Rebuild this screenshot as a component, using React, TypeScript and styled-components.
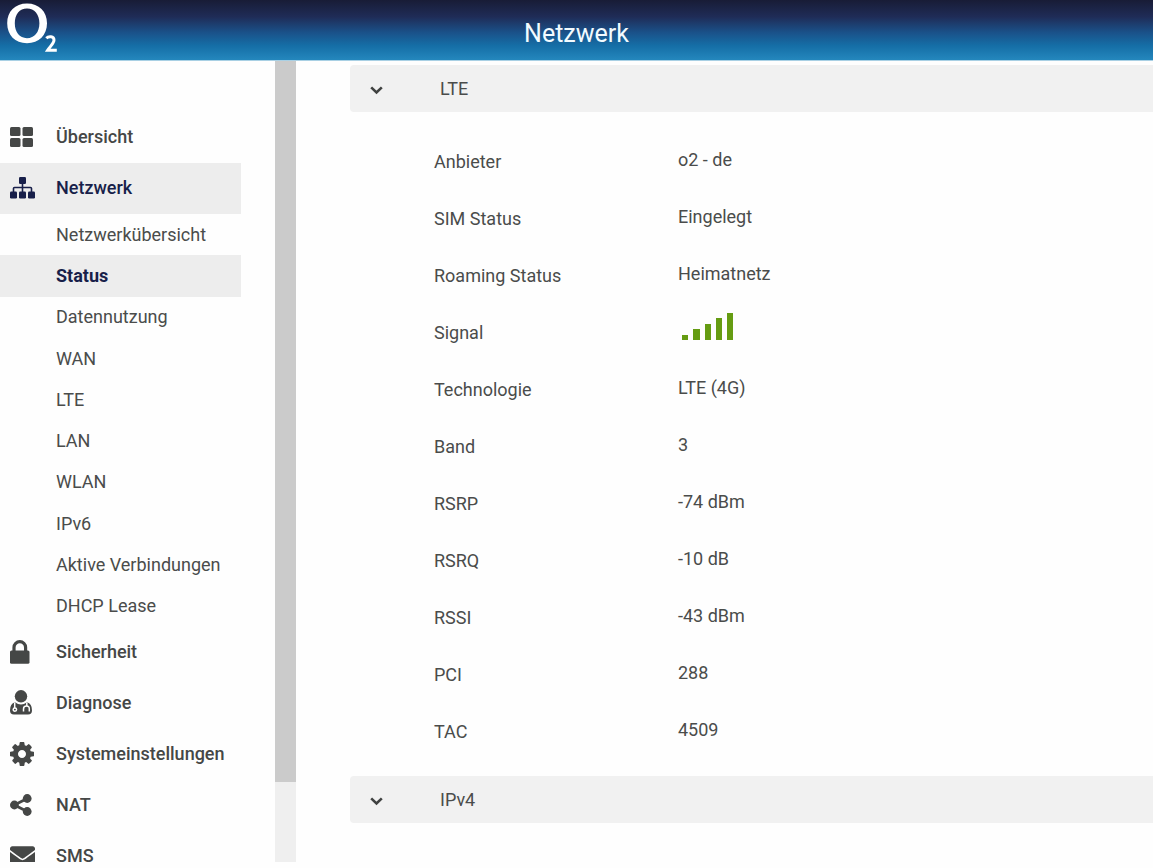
import React from "react";
import styled, { createGlobalStyle } from "styled-components";
import { FaEnvelope } from "react-icons/fa";

const Global = createGlobalStyle`
  * { box-sizing: border-box; }
  body { margin: 0; background: #fefefe; color: #4a4c4b; font-family: Roboto, "Liberation Sans", sans-serif; font-size: 18px; line-height: 24px; }
  ul, dl, dd, h1, h2 { margin: 0; padding: 0; font-weight: 400; }
  ul { list-style: none; }
`;
const Page = styled.div`
  height: 100vh;
  display: flex;
  flex-direction: column;
  overflow: hidden;
`;
const Header = styled.header`
  flex: none;
  height: 61px;
  display: grid;
  grid-template-columns: 1fr auto 1fr;
  background: linear-gradient(#181c36 0%, #1f2c57 28%, #1a5189 54%, #156ea6 76%, #2487bd 100%);
  border-bottom: 1px solid #a9d0e4;
`;
const Logo = styled.svg`
  width: 60px;
  height: 60px;
  display: block;
`;
const PageTitle = styled.h1`
  padding-top: 17px;
  color: #f2fbff;
  font-size: 25px;
  line-height: 34px;
`;
const Body = styled.div`
  flex: 1;
  min-height: 0;
  display: flex;
`;
const Sidebar = styled.aside`
  flex: none;
  width: 296px;
  margin-bottom: 6px;
  display: flex;
  justify-content: space-between;
  overflow: hidden;
`;
const Nav = styled.nav`
  width: 241px;
  padding-top: 51px;
`;
const MenuLink = styled.a<{ $active?: boolean }>`
  height: 51px;
  padding: 0 0 2px 10px;
  display: grid;
  grid-template-columns: 46px 1fr;
  align-items: center;
  color: ${(p) => (p.$active ? "#181f4a" : "#454746")};
  background: ${(p) => (p.$active ? "#ededed" : "transparent")};
  font-weight: 500;
  text-decoration: none;
  svg { display: block; }
`;
const SubMenu = styled.ul`
  height: 413px;
  display: grid;
  grid-auto-rows: 1fr;
`;
const SubLink = styled.a<{ $active?: boolean }>`
  height: 100%;
  padding-left: 56px;
  display: flex;
  align-items: center;
  color: ${(p) => (p.$active ? "#181f4a" : "#4a4c4b")};
  background: ${(p) => (p.$active ? "#ededed" : "transparent")};
  font-weight: ${(p) => (p.$active ? 700 : 400)};
  text-decoration: none;
`;
const ScrollTrack = styled.div`
  width: 21px;
  background: #efefef;
`;
const ScrollThumb = styled.div`
  height: 90%;
  background: #cbcbcb;
`;
const Content = styled.main`
  flex: 1;
  min-width: 0;
  padding: 4px 0 0 54px;
  overflow: hidden;
`;
const SectionTitle = styled.h2`
  font-size: 18px;
`;
const SectionButton = styled.button`
  width: 100%;
  height: 47px;
  padding: 0 0 0 20px;
  display: grid;
  grid-template-columns: 70px 1fr;
  align-items: center;
  border: 0;
  border-radius: 4px 0 0 4px;
  background: #f1f1f1;
  color: inherit;
  font: inherit;
  text-align: left;
  svg { display: block; margin-top: 4px; }
`;
const Details = styled.dl`
  height: 664px;
  padding: 22px 0 16px 84px;
  display: grid;
  grid-auto-rows: 1fr;
`;
const Row = styled.div`
  display: grid;
  grid-template-columns: 244px 1fr;
  align-items: center;
`;
const Value = styled.dd`
  padding-bottom: 4px;
  svg { display: block; }
`;

const TilesIcon = () => (
  <svg width="23" height="20" viewBox="0 0 23 20" fill="currentColor" aria-hidden="true">
    <rect width="10.500" height="9" rx="1.500" />
    <rect x="12.500" width="10.500" height="9" rx="1.500" />
    <rect y="11" width="10.500" height="9" rx="1.500" />
    <rect x="12.500" y="11" width="10.500" height="9" rx="1.500" />
  </svg>
);
const SitemapIcon = () => (
  <svg width="25" height="22" viewBox="0 0 25 22" fill="currentColor" aria-hidden="true">
    <rect x="9" width="7" height="7" rx="1.200" />
    <rect y="14.500" width="7" height="7" rx="1.200" />
    <rect x="9" y="14.500" width="7" height="7" rx="1.200" />
    <rect x="18" y="14.500" width="7" height="7" rx="1.200" />
    <path d="M12.500 6V15M3.500 15V11.500Q3.500 10.500 4.500 10.500H20.500Q21.500 10.500 21.500 11.500V15" fill="none" stroke="currentColor" strokeWidth="1.600" />
  </svg>
);
const LockIcon = () => (
  <svg width="20" height="24" viewBox="0 0 20 24" fill="currentColor" aria-hidden="true">
    <rect y="10.500" width="19.500" height="13.300" rx="1.600" />
    <path d="M4 11.500V7.500a5.800 5.800 0 0 1 11.600 0V11.500" fill="none" stroke="currentColor" strokeWidth="3.200" />
  </svg>
);
const DoctorIcon = () => (
  <svg width="22" height="25" viewBox="0 0 22 25" aria-hidden="true">
    <path d="M5 12.300Q8 14.500 11 14.500T17 12.300Q22 13.500 22 20.500Q22 24.500 18 24.500H4Q0 24.500 0 20.500Q0 13.500 5 12.300Z" fill="currentColor" />
    <circle cx="11" cy="6.300" r="6.200" fill="currentColor" />
    <g fill="none" stroke="#fefefe" strokeWidth="1.500">
      <path d="M4.700 12.500V18M16.800 12.500V16" />
      <circle cx="4.900" cy="19.600" r="1.700" />
      <path d="M13.500 21.500V19Q13.500 16 16.500 16T19.300 19V21.500" />
    </g>
  </svg>
);
const GearIcon = () => (
  <svg width="24" height="24" viewBox="0 128 1536 1536" fill="currentColor" aria-hidden="true">
    <path d="M1024 896q0-106-75-181t-181-75-181 75-75 181 75 181 181 75 181-75 75-181zm512-109v222q0 12-8 23t-20 13l-185 28q-19 54-39 91 35 50 107 138 10 12 10 25t-9 23q-27 37-99 108t-94 71q-12 0-26-9l-138-108q-44 23-91 38-16 136-29 186-7 28-36 28h-222q-14 0-24.500-8.500t-11.500-21.500l-28-184q-49-16-90-37l-141 107q-10 9-25 9-14 0-25-11-126-114-165-168-7-10-7-23 0-12 8-23 15-21 51-66.500t54-70.500q-27-50-41-99l-183-27q-13-2-21-12.500t-8-23.500v-222q0-12 8-23t19-13l186-28q14-46 39-92-40-57-107-138-10-12-10-24 0-10 9-23 26-36 98.500-107.500t94.500-71.500q13 0 26 10l138 107q44-23 91-38 16-136 29-186 7-28 36-28h222q14 0 24.500 8.500t11.500 21.500l28 184q49 16 90 37l142-107q9-9 24-9 13 0 25 10 129 119 165 170 7 8 7 22 0 12-8 23-15 21-51 66.500t-54 70.500q26 50 41 98l183 28q13 2 21 12.500t8 23.500z" />
  </svg>
);
const ShareIcon = () => (
  <svg width="22" height="22" viewBox="0 0 22 22" fill="currentColor" aria-hidden="true">
    <circle cx="4.400" cy="11" r="4.400" />
    <circle cx="17.200" cy="4.500" r="4.400" />
    <circle cx="17.200" cy="17.500" r="4.400" />
    <path d="M17.200 4.500 4.400 11 17.200 17.500" fill="none" stroke="currentColor" strokeWidth="2.800" />
  </svg>
);
const Chevron = () => (
  <svg width="13" height="9" viewBox="0 0 13 9" fill="none" stroke="#404241" strokeWidth="2.600" aria-hidden="true">
    <path d="M1.200 1.400 6.500 6.500 11.800 1.400" />
  </svg>
);
const SignalBars = () => (
  <svg width="56" height="37" viewBox="0 0 56 37" fill="#659c12" role="img" aria-label="5 von 5">
    <path d="M4 22h6v5H4zM15 16h7v11h-7zM27 11h6v16h-6zM38 5h6v22h-6zM49 0h6v27h-6z" />
  </svg>
);

const submenu = ["Netzwerkübersicht", "Status", "Datennutzung", "WAN", "LTE", "LAN", "WLAN", "IPv6", "Aktive Verbindungen", "DHCP Lease"];
const lowerMenu = [
  { label: "Sicherheit", icon: <LockIcon /> },
  { label: "Diagnose", icon: <DoctorIcon /> },
  { label: "Systemeinstellungen", icon: <GearIcon /> },
  { label: "NAT", icon: <ShareIcon /> },
  { label: "SMS", icon: <FaEnvelope size={25} /> },
];
const lte: [string, React.ReactNode][] = [
  ["Anbieter", "o2 - de"],
  ["SIM Status", "Eingelegt"],
  ["Roaming Status", "Heimatnetz"],
  ["Signal", <SignalBars key="signal" />],
  ["Technologie", "LTE (4G)"],
  ["Band", "3"],
  ["RSRP", "-74 dBm"],
  ["RSRQ", "-10 dB"],
  ["RSSI", "-43 dBm"],
  ["PCI", "288"],
  ["TAC", "4509"],
];

export default function App() {
  return (
    <Page>
      <Global />
      <Header>
        <Logo viewBox="0 0 60 60" role="img" aria-label="O2">
          <path fillRule="evenodd" fill="#fff" d="M27 3.500C39 3.500 47 11.500 47 23.300S39 43.200 27 43.200 7.200 35.100 7.200 23.300 15 3.500 27 3.500ZM27 8.500C19.500 8.500 14.800 14.500 14.800 23.300S19.500 38.200 27 38.200 39.400 32.200 39.400 23.300 34.500 8.500 27 8.500Z" />
          <path d="M46.300 38.200C48.500 35.900 54 35.900 54 40C54 43.500 50 46.500 47.600 50.300H56.800" fill="none" stroke="#fff" strokeWidth="3" />
        </Logo>
        <PageTitle>Netzwerk</PageTitle>
      </Header>
      <Body>
        <Sidebar>
          <Nav>
            <ul>
              <li><MenuLink href="#uebersicht"><TilesIcon />Übersicht</MenuLink></li>
              <li>
                <MenuLink href="#netzwerk" $active><SitemapIcon />Netzwerk</MenuLink>
                <SubMenu>
                  {submenu.map((s) => (
                    <li key={s}><SubLink href={"#" + s} $active={s === "Status"}>{s}</SubLink></li>
                  ))}
                </SubMenu>
              </li>
              {lowerMenu.map((m) => (
                <li key={m.label}><MenuLink href={"#" + m.label}>{m.icon}{m.label}</MenuLink></li>
              ))}
            </ul>
          </Nav>
          <ScrollTrack><ScrollThumb /></ScrollTrack>
        </Sidebar>
        <Content>
          <SectionTitle><SectionButton aria-expanded="true"><Chevron />LTE</SectionButton></SectionTitle>
          <Details>
            {lte.map(([label, value]) => (
              <Row key={label}><dt>{label}</dt><Value>{value}</Value></Row>
            ))}
          </Details>
          <SectionTitle><SectionButton aria-expanded="true"><Chevron />IPv4</SectionButton></SectionTitle>
        </Content>
      </Body>
    </Page>
  );
}
